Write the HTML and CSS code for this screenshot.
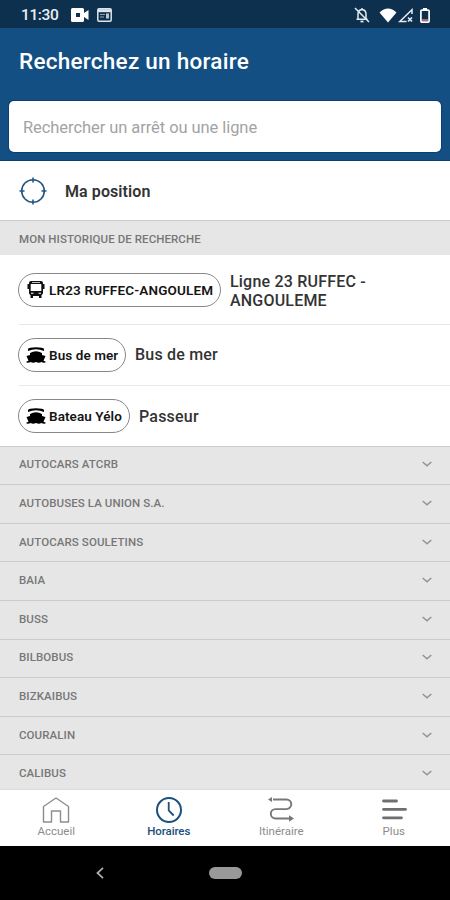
FILE: index.html
```
<!DOCTYPE html>
<html lang="fr">
<head>
<meta charset="utf-8">
<title>Horaires</title>
<link rel="stylesheet" href="styles.css">
</head>
<body>
<div class="status">
  <span class="time">11:30</span>
  <svg class="cam" width="18" height="14" viewBox="0 0 18 14"><path fill="#fff" fill-rule="evenodd" d="M1.500 0h10Q13 0 13 1.500V5l4.500-3v10L13 9v3.500Q13 14 11.500 14h-10Q0 14 0 12.500v-11Q0 0 1.500 0zM5 5v4h4V5z"/></svg>
  <svg class="cal" width="15" height="14" viewBox="0 0 15 14"><rect x=".8" y=".8" width="13.400" height="12.400" rx="1.200" fill="none" stroke="#dce4ec" stroke-width="1.500"/><path d="M1 2.700h13" stroke="#dce4ec" stroke-width="3"/><path d="M3 6.500h5M3 9h4" stroke="#8fa2b5" stroke-width="1.200"/><path d="M9 5.500h3v5H9z" fill="#b9c6d2"/></svg>
  <span class="grow"></span>
  <svg class="bell" width="16" height="16" viewBox="0 0 16 16" fill="none" stroke="#e4eaf0" stroke-width="1.500"><path d="M4 12V7q0-4 4-4.500 4 .5 4 4.500v5M2.500 12.200h11M8 1v2"/><path d="M6.500 14.500h3" stroke-width="1.800"/><path d="M1 1l14 14"/></svg>
  <svg class="wifi" width="18" height="15" viewBox="0 0 18 15"><path d="M0.500 4.500Q9-3.500 17.500 4.500L9 14.500z" fill="#fff"/></svg>
  <svg class="signal" width="15" height="15" viewBox="0 0 15 15" fill="none" stroke="#e4eaf0" stroke-width="1.500"><path d="M14 6V1.700L1.800 13.500H8.500"/><path d="M10 9.500l4 4m0-4l-4 4" stroke-width="1.700"/></svg>
  <svg class="battery" width="10" height="15" viewBox="0 0 10 15"><path d="M3 0h4v2H3z" fill="#fff"/><rect x=".9" y="2.100" width="8.200" height="12" rx="1" fill="none" stroke="#fff" stroke-width="1.700"/><path d="M2 12h6" stroke="#d98178" stroke-width="1.500"/></svg>
</div>
<header class="header">
  <h1>Recherchez un horaire</h1>
  <div class="search">Rechercher un arrêt ou une ligne</div>
</header>
<main>
  <div class="position">
    <svg width="28" height="28" viewBox="0 0 28 28" fill="none" stroke="#245680" stroke-width="1.600"><circle cx="14" cy="14" r="11.300"/><path d="M14 .5v5M14 22.500v5M.5 14h5M22.500 14h5"/></svg>
    <span>Ma position</span>
  </div>
  <h2 class="section">MON HISTORIQUE DE RECHERCHE</h2>
  <div class="history">
    <div class="entry first">
      <span class="pill p1"><svg width="20" height="20" viewBox="0 0 20 20"><path fill="#111" fill-rule="evenodd" d="M5 1h10q2 0 2 2v1h1.500v5H17v4q0 1.500-1.500 2v3H13v-2H7v2H4.500v-3Q3 14.500 3 13V9H1.500V4H3V3q0-2 2-2zM4.700 4v7h10.600V4zM6 2v.8h8V2zM5 12.700v1.100h2.500v-1.100zm7.500 0v1.100H15v-1.100z"/></svg><b>LR23 RUFFEC-ANGOULEM</b></span>
      <span class="label l1">Ligne 23 RUFFEC -<br>ANGOULEME</span>
    </div>
    <div class="entry">
      <span class="pill p2"><svg width="20" height="18" viewBox="0 0 20 18"><path d="M2 5V3Q2.500 1.300 10 1.300T18 3v2Q14 3.300 10 3.300T2 5z"/><path d="M4 9V7q6-3.500 12 0v2l3.500 1-2 4.800 2 .7v1.100q-2.500.4-4-.5-2.500 1.300-5.500 0-3 1.300-5.500 0-1.500.9-4 .5v-1.100l2-.7-2-4.800z"/></svg><b>Bus de mer</b></span>
      <span class="label">Bus de mer</span>
    </div>
    <div class="entry last">
      <span class="pill p3"><svg width="20" height="18" viewBox="0 0 20 18"><path d="M2 5V3Q2.500 1.300 10 1.300T18 3v2Q14 3.300 10 3.300T2 5z"/><path d="M4 9V7q6-3.500 12 0v2l3.500 1-2 4.800 2 .7v1.100q-2.500.4-4-.5-2.500 1.300-5.500 0-3 1.300-5.500 0-1.500.9-4 .5v-1.100l2-.7-2-4.800z"/></svg><b>Bateau Yélo</b></span>
      <span class="label">Passeur</span>
    </div>
  </div>
  <div class="groups">
    <div class="group"><span>AUTOCARS ATCRB</span><svg width="10" height="6" viewBox="0 0 10 6"><path d="M.7 1L5 4.700 9.300 1"/></svg></div>
    <div class="group"><span>AUTOBUSES LA UNION S.A.</span><svg width="10" height="6" viewBox="0 0 10 6"><path d="M.7 1L5 4.700 9.300 1"/></svg></div>
    <div class="group"><span>AUTOCARS SOULETINS</span><svg width="10" height="6" viewBox="0 0 10 6"><path d="M.7 1L5 4.700 9.300 1"/></svg></div>
    <div class="group"><span>BAIA</span><svg width="10" height="6" viewBox="0 0 10 6"><path d="M.7 1L5 4.700 9.300 1"/></svg></div>
    <div class="group"><span>BUSS</span><svg width="10" height="6" viewBox="0 0 10 6"><path d="M.7 1L5 4.700 9.300 1"/></svg></div>
    <div class="group"><span>BILBOBUS</span><svg width="10" height="6" viewBox="0 0 10 6"><path d="M.7 1L5 4.700 9.300 1"/></svg></div>
    <div class="group"><span>BIZKAIBUS</span><svg width="10" height="6" viewBox="0 0 10 6"><path d="M.7 1L5 4.700 9.300 1"/></svg></div>
    <div class="group"><span>COURALIN</span><svg width="10" height="6" viewBox="0 0 10 6"><path d="M.7 1L5 4.700 9.300 1"/></svg></div>
    <div class="group"><span>CALIBUS</span><svg width="10" height="6" viewBox="0 0 10 6"><path d="M.7 1L5 4.700 9.300 1"/></svg></div>
  </div>
</main>
<nav class="tabs">
  <div class="tab"><svg width="28" height="28" viewBox="0 0 28 28" fill="none" stroke="#8d8d8d" stroke-width="1.400" stroke-linejoin="round"><path d="M1.500 10.500L14 2l12.500 8.500V26h-8V15h-9v11h-8z"/></svg><span>Accueil</span></div>
  <div class="tab active"><svg width="28" height="28" viewBox="0 0 28 28" fill="none" stroke="#1b4f7c" stroke-width="2"><circle cx="14" cy="14" r="12"/><path d="M13.700 6v8.500l5 5" stroke-width="1.800"/></svg><span>Horaires</span></div>
  <div class="tab"><svg width="28" height="28" viewBox="0 0 28 28" fill="none" stroke="#777" stroke-width="1.900"><path d="M6 3.500h13.500a4.800 4.800 0 0 1 0 9.600H8.500a4.700 4.700 0 0 0 0 9.400H23"/><path d="M5 1L1 3.500 5 6zM22 19.200l5 3.300-5 3.300z" fill="#777" stroke="none"/></svg><span>Itinéraire</span></div>
  <div class="tab"><svg width="28" height="28" viewBox="0 0 28 28" fill="none" stroke="#6f6f6f" stroke-width="2.800" stroke-linecap="round"><path d="M3.500 5h13M3.500 13.400h22M3.500 21.800h18"/></svg><span>Plus</span></div>
</nav>
<div class="system">
  <svg width="8" height="12" viewBox="0 0 8 12" fill="none" stroke="#aaa" stroke-width="1.800"><path d="M7 .8L1.500 6 7 11.200"/></svg>
  <i class="home"></i>
</div>
</body>
</html>
```
FILE: styles.css
```
* { box-sizing: border-box; }
body { margin: 0; width: 450px; height: 900px; overflow: hidden; display: flex; flex-direction: column; background: #fff; font-family: Roboto, "Liberation Sans", sans-serif; color: #333; }
svg { display: block; flex: none; }
.status { height: 28px; flex: none; background: #0e304f; color: #e9eef3; display: flex; align-items: center; padding: 2px 20px 0 21px; }
.time { width: 50px; font-size: 15.500px; font-weight: 500; letter-spacing: -.4px; white-space: nowrap; }
.cal { margin-left: 8px; }
.grow { flex: 1; }
.wifi { margin-left: 9px; }
.signal { margin-left: 1px; }
.battery { margin-left: 7px; }
.header { height: 132.500px; flex: none; background: #144f84; padding: 0 9px; border-bottom: 1px solid #0c3f70; }
h1 { margin: 0; height: 73px; padding: 0 10px; font-size: 22.500px; font-weight: 500; line-height: 67px; color: #fff; letter-spacing: .26px; white-space: nowrap; }
.search { height: 51px; border-radius: 5px; background: #fff; box-shadow: 0 0 1px 1px #0d3f70; padding: 0 14px; line-height: 53px; font-size: 16.500px; letter-spacing: -.07px; color: #a3a3a3; white-space: nowrap; }
main { flex: none; height: 628.500px; overflow: hidden; }
.position { height: 59.500px; display: flex; align-items: center; padding: 2px 19px 0; gap: 18px; font-size: 16px; font-weight: 600; letter-spacing: .08px; }
.section { margin: 0; height: 35px; border-top: 1px solid #ccc; background: #e6e6e6; color: #777; padding-left: 19px; font-size: 11.500px; font-weight: 500; letter-spacing: .08px; line-height: 37px; }
.history { padding-left: 19px; }
.entry { height: 60.500px; display: flex; align-items: center; gap: 9px; border-bottom: 1px solid #e8e8e8; }
.first { height: 70px; padding-top: 1px; }
.last { height: 60px; border: 0; padding-top: 1px; }
.pill { height: 34px; border: 1px solid #888; border-radius: 17px; display: flex; align-items: center; padding-left: 7px; gap: 3px; margin-left: -1px; color: #151515; white-space: nowrap; }
.pill b { font-size: 13.500px; font-weight: 600; letter-spacing: .08px; }
.p1 { width: 203px; }
.p1 b { letter-spacing: .16px; }
.p2 { width: 108px; }
.p3 { width: 112px; }
.label { font-size: 16px; line-height: 19px; font-weight: 500; letter-spacing: .2px; white-space: nowrap; }
.l1 { padding-top: 2px; }
.group { height: 38.620px; border-top: 1px solid #cbcbcb; background: #e6e6e6; display: flex; align-items: center; justify-content: space-between; padding: 0 18px 2px 19px; color: #777; font-size: 11.500px; font-weight: 500; letter-spacing: .09px; }
.group svg { fill: none; stroke: #929292; stroke-width: 1.500; }
.tabs { flex: none; height: 57px; border-top: 1px solid #ddd; display: grid; grid-template-columns: repeat(4, 1fr); background: #fff; }
.tab { display: flex; flex-direction: column; align-items: center; padding-top: 6px; font-size: 11.500px; line-height: 15px; color: #8c8c8c; }
.tab.active { color: #1b4f7c; font-weight: 500; letter-spacing: -.1px; }
.system { flex: 1; background: #000; display: flex; align-items: center; padding-left: 96px; }
.home { width: 33px; height: 12px; border-radius: 6px; background: #999; margin-left: 105px; }
```
